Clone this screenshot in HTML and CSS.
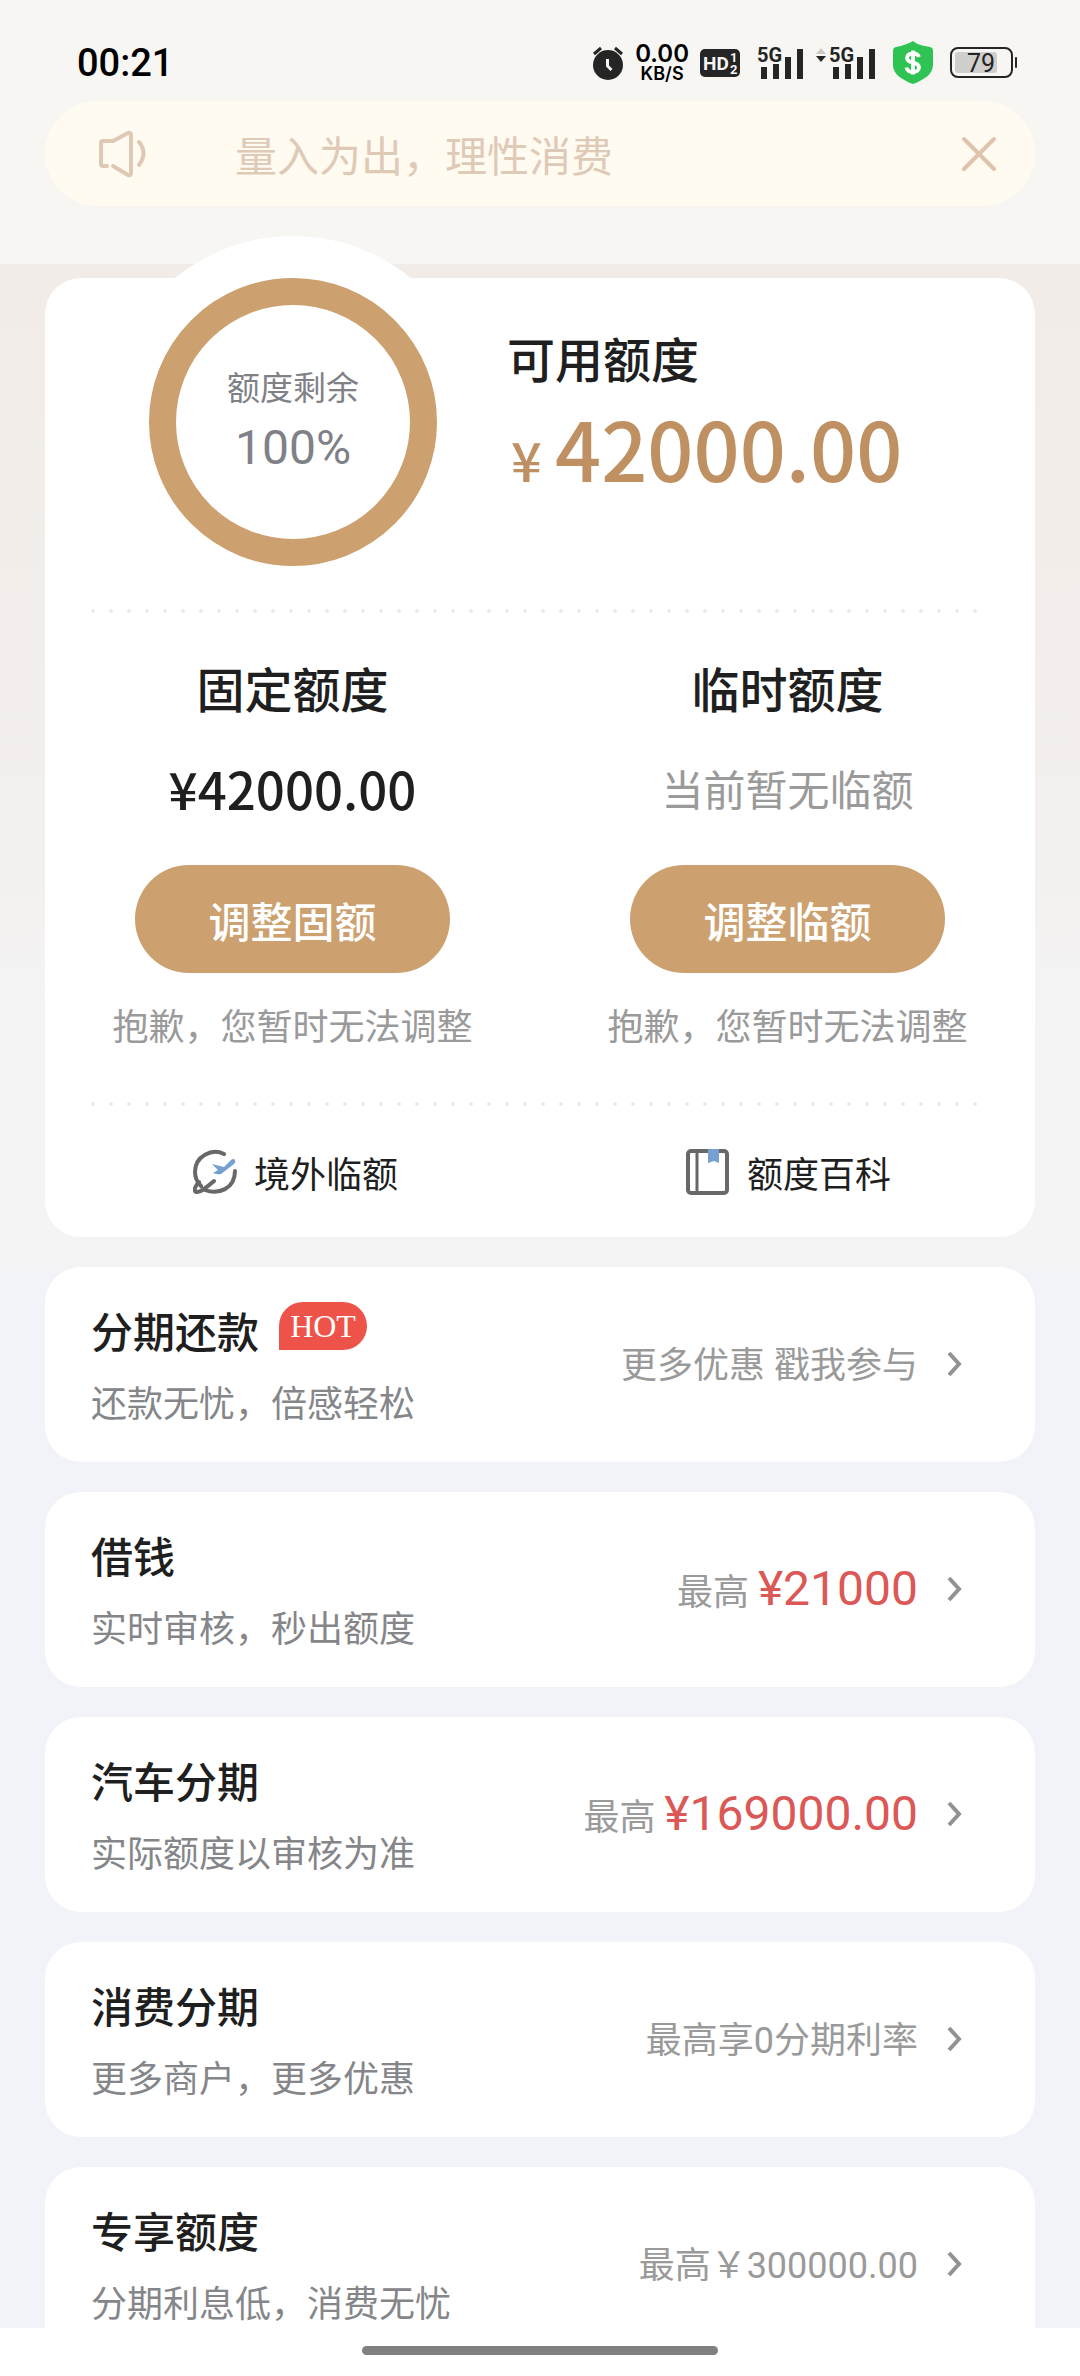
FILE: index.html
```html
<!DOCTYPE html>
<html lang="zh-CN">
<head>
  <meta charset="utf-8">
  <meta name="viewport" content="width=device-width, initial-scale=1">
  <title>我的额度</title>
  <link rel="stylesheet" href="styles.css">
</head>
<body>
  <div class="screen">
    <div class="status-bar">
      <time class="clock">00:21</time>
      <div class="status-icons">
        <div class="status-group">
          <svg width="32" height="34" viewBox="0 0 32 34" aria-hidden="true">
            <circle cx="16" cy="19" r="15" fill="#252525"/>
            <path d="M2 8 9 2M30 8 23 2" stroke="#252525" stroke-width="3" fill="none"/>
            <path d="M15.500 13v7l4 4" stroke="#f7f6f3" stroke-width="3" fill="none"/>
          </svg>
          <div class="net-speed"><span class="net-value">0.00</span><span class="net-unit">KB/S</span></div>
          <svg class="status-svg" width="40" height="28" viewBox="0 0 40 28" role="img" aria-label="HD 1 2">
            <rect width="40" height="28" rx="5" fill="#252525"/>
            <text class="hd" x="3" y="21">HD</text>
            <text class="hd-sim" x="30" y="13">1</text>
            <text class="hd-sim" x="30" y="25">2</text>
          </svg>
        </div>
        <div class="status-group">
          <svg class="status-svg" width="48" height="42" viewBox="0 -4 48 42" role="img" aria-label="5G">
            <text class="net-type" x="0" y="16">5G</text>
            <path d="M4 21h6v12H4zM16 18h6v15h-6zM28 11h6v22h-6zM40 3h6v30h-6z" fill="#252525"/>
          </svg>
          <svg class="status-svg" width="60" height="42" viewBox="0 -4 60 42" role="img" aria-label="5G">
            <path d="M0 8 5 2l5 6z" fill="#c9c9c7"/>
            <path d="M0 10h10l-5 6z" fill="#252525"/>
            <text class="net-type" x="13" y="16">5G</text>
            <path d="M17 21h6v12h-6zM29 18h6v15h-6zM41 11h6v22h-6zM53 3h6v30h-6z" fill="#252525"/>
          </svg>
        </div>
        <svg class="status-svg" width="40" height="44" viewBox="0 0 40 44" role="img" aria-label="$">
          <path d="M20 0c3 3 10 5 17 6q3 .5 3 4v14c0 9-9 15-20 19C9 39 0 33 0 24V10Q0 6.500 3 6 13 4 20 0z" fill="#2fc353"/>
          <path d="M26 16c-1-3-4-3.500-6-3.500-4 0-6 2-6 4.500 0 3 3 4 6 4.600 3.500.7 6 2 6 4.900 0 3-3 4.500-6 4.500-3.500 0-6-1.500-6.500-4.500M20 9.500v24" fill="none" stroke="#fff" stroke-width="3.800"/>
        </svg>
        <svg class="status-svg" width="68" height="32" viewBox="0 0 68 32" role="img" aria-label="79">
          <rect x="1" y="1" width="61" height="29" rx="7" fill="none" stroke="#252525" stroke-width="2"/>
          <rect x="5" y="5" width="42" height="21" rx="3" fill="#cfcfcd"/>
          <rect x="65" y="10" width="2" height="11" rx="1" fill="#252525"/>
          <text class="battery-level" x="17" y="25">79</text>
        </svg>
      </div>
    </div>

    <main class="content">
      <header class="top">
        <div class="notice">
          <svg width="48" height="48" viewBox="0 0 48 48" fill="none" stroke="#dfc9b5" stroke-width="4" stroke-linecap="round" stroke-linejoin="round" aria-hidden="true">
            <path d="M8 36H4q-2 0-2-2V13q0-2 2-2h10L29 3q3-1 3 2v38q0 3-3 2L14 36"/>
            <path d="M40 12q9 11 0 23"/>
          </svg>
          <p class="notice-text">量入为出，理性消费</p>
          <button class="notice-close" type="button" aria-label="关闭">
            <svg width="36" height="36" viewBox="0 0 36 36" fill="none" stroke="#dfc3ac" stroke-width="4" stroke-linecap="round" aria-hidden="true"><path d="m3 3 30 30M33 3 3 33"/></svg>
          </button>
        </div>
      </header>

      <div class="cards">
        <section class="card overview">
          <div class="available">
            <div class="ring">
              <span class="ring-label">额度剩余</span>
              <span class="ring-value">100%</span>
            </div>
            <div class="available-info">
              <h1 class="heading">可用额度</h1>
              <p class="available-amount"><span class="currency">¥</span>42000.00</p>
            </div>
          </div>
          <hr class="dots">
          <div class="limits">
            <div class="limit">
              <h2 class="heading">固定额度</h2>
              <p class="limit-value">¥42000.00</p>
              <button class="adjust" type="button">调整固额</button>
              <p class="limit-note">抱歉，您暂时无法调整</p>
            </div>
            <div class="limit">
              <h2 class="heading">临时额度</h2>
              <p class="limit-value limit-empty">当前暂无临额</p>
              <button class="adjust" type="button">调整临额</button>
              <p class="limit-note">抱歉，您暂时无法调整</p>
            </div>
          </div>
          <hr class="dots">
          <nav class="links">
            <a class="link" href="#">
              <svg width="44" height="46" viewBox="0 0 44 46" fill="none" aria-hidden="true">
                <path d="M31 5C19-1 2 7 2 23c0 6 3 11 6 14M42 22c0 18-17 24-30 19M21 32C14 38 7 44 3 43c-3-2 0-7 3-10" stroke="#686868" stroke-width="4" stroke-linecap="round"/>
                <path d="M19 15l12 3 7-7q3-2 4 0t-1 4L28 25q-3 1-8-1l5-3z" fill="#76a0cf"/>
              </svg>
              境外临额
            </a>
            <a class="link" href="#">
              <svg width="44" height="46" viewBox="0 0 44 46" fill="none" aria-hidden="true">
                <rect x="2" y="2" width="39" height="42" rx="3" stroke="#686868" stroke-width="4"/>
                <path d="M11 3v40" stroke="#686868" stroke-width="3"/>
                <path d="M22 0h11v14l-5-2-6 2z" fill="#76a0cf"/>
              </svg>
              额度百科
            </a>
          </nav>
        </section>

        <a class="card item" href="#">
          <div class="item-main">
            <h3 class="item-title">分期还款 <span class="hot">HOT</span></h3>
            <p class="item-sub">还款无忧，倍感轻松</p>
          </div>
          <p class="item-side">更多优惠 戳我参与</p>
          <svg class="chevron" width="16" height="28" viewBox="0 0 16 28" aria-hidden="true"><path d="m3 3 10 11L3 25"/></svg>
        </a>
        <a class="card item" href="#">
          <div class="item-main">
            <h3 class="item-title">借钱</h3>
            <p class="item-sub">实时审核，秒出额度</p>
          </div>
          <p class="item-side">最高 <strong class="price">¥21000</strong></p>
          <svg class="chevron" width="16" height="28" viewBox="0 0 16 28" aria-hidden="true"><path d="m3 3 10 11L3 25"/></svg>
        </a>
        <a class="card item" href="#">
          <div class="item-main">
            <h3 class="item-title">汽车分期</h3>
            <p class="item-sub">实际额度以审核为准</p>
          </div>
          <p class="item-side">最高 <strong class="price">¥169000.00</strong></p>
          <svg class="chevron" width="16" height="28" viewBox="0 0 16 28" aria-hidden="true"><path d="m3 3 10 11L3 25"/></svg>
        </a>
        <a class="card item" href="#">
          <div class="item-main">
            <h3 class="item-title">消费分期</h3>
            <p class="item-sub">更多商户，更多优惠</p>
          </div>
          <p class="item-side">最高享0分期利率</p>
          <svg class="chevron" width="16" height="28" viewBox="0 0 16 28" aria-hidden="true"><path d="m3 3 10 11L3 25"/></svg>
        </a>
        <a class="card item" href="#">
          <div class="item-main">
            <h3 class="item-title">专享额度</h3>
            <p class="item-sub">分期利息低，消费无忧</p>
          </div>
          <p class="item-side">最高￥300000.00</p>
          <svg class="chevron" width="16" height="28" viewBox="0 0 16 28" aria-hidden="true"><path d="m3 3 10 11L3 25"/></svg>
        </a>
      </div>
    </main>

    <div class="home-bar"><span class="home-handle"></span></div>
  </div>
</body>
</html>
```
FILE: styles.css
```css
* {
  box-sizing: border-box;
}

body,
h1,
h2,
h3,
p {
  margin: 0;
}

body {
  font-family: "Noto Sans CJK SC", sans-serif;
  color: #1f1f1f;
  background: #f2f3f8;
}

button {
  font: inherit;
  border: 0;
  padding: 0;
  cursor: pointer;
}

a {
  color: inherit;
  text-decoration: none;
}

svg {
  display: block;
  flex: none;
}

.screen {
  display: flex;
  flex-direction: column;
  height: 100vh;
}

/* Status bar */
.status-bar {
  display: flex;
  flex: none;
  justify-content: space-between;
  align-items: center;
  height: 101px;
  padding: 24px 62px 0 77px;
  background: #f7f6f3;
}

.clock {
  font: 500 38px/44px Roboto, sans-serif;
  color: #000;
}

.status-icons {
  display: flex;
  align-items: center;
  gap: 17px;
}

.status-group {
  display: flex;
  align-items: center;
  gap: 11px;
}

.net-speed {
  display: flex;
  flex-direction: column;
  align-items: center;
  font-family: Inter, sans-serif;
  font-weight: 600;
  color: #000;
}

.net-value {
  font-size: 24px;
  line-height: 22px;
}

.net-unit {
  font-size: 18px;
  line-height: 18px;
}

.status-svg {
  font-family: Roboto, sans-serif;
}

.hd {
  font-size: 19px;
  font-weight: 700;
  fill: #f7f6f3;
}

.hd-sim {
  font-size: 13px;
  font-weight: 700;
  fill: #f7f6f3;
}

.net-type {
  font-size: 20px;
  font-weight: 700;
  fill: #252525;
}

.battery-level {
  font-size: 25px;
  fill: #252525;
}

/* Scrolling content */
.content {
  flex: 1;
  min-height: 0;
  overflow-y: auto;
  scrollbar-width: none;
}

.top {
  padding: 0 45px 58px;
  background: #f7f6f3;
}

.notice {
  display: flex;
  align-items: center;
  min-height: 105px;
  padding: 0 38px 0 54px;
  border-radius: 53px;
  background: #fffbf1;
}

.notice-text {
  flex: 1;
  margin-left: 88px;
  font-size: 42px;
  line-height: 60px;
  color: #dfcab7;
}

.notice-close {
  background: none;
}

.cards {
  display: flex;
  flex-direction: column;
  gap: 30px;
  padding: 14px 45px 30px;
  background: linear-gradient(#f1ece7, #f3efed 50%, #f4f4f4 75%, #f4f4f4 98%, #f2f3f8) no-repeat top / 100% 1014px;
}

.card {
  border-radius: 36px;
  background: #fff;
}

/* Overview card */
.available {
  display: flex;
  gap: 70px;
  padding: 0 46px 43px 104px;
}

.ring {
  display: flex;
  flex: none;
  flex-direction: column;
  align-items: center;
  gap: 8px;
  width: 288px;
  height: 288px;
  padding-top: 57px;
  border: 27px solid #cca16f;
  border-radius: 50%;
  background: #fff;
  box-shadow: 0 0 0 42px #fff;
  color: #808187;
}

.ring-label {
  font-size: 33px;
  line-height: 48px;
}

.ring-value {
  font: 48px/60px Roboto, sans-serif;
}

.available-info {
  padding-top: 49px;
}

.heading {
  font-size: 48px;
  font-weight: 500;
  line-height: 60px;
}

.available-amount {
  margin-top: 10px;
  font-size: 81px;
  font-weight: 500;
  line-height: 100px;
  color: #be9062;
}

.currency {
  display: inline-block;
  width: 48px;
  padding-left: 4px;
  font-size: 54px;
}

.dots {
  height: 4px;
  margin: 0 46px;
  border: 0;
  background: radial-gradient(circle at 2px 2px, #ebebeb 2px, transparent 2px) 0 0 / 18px 4px repeat-x;
}

.limits {
  display: grid;
  grid-template-columns: 1fr 1fr;
  padding: 44px 0 52px;
}

.limit {
  display: flex;
  flex-direction: column;
  align-items: center;
}

.limit-value {
  margin-top: 41px;
  font-size: 51px;
  font-weight: 500;
  line-height: 60px;
}

.limit-empty {
  font-size: 42px;
  font-weight: 400;
  color: #9a9a9a;
}

.adjust {
  width: 315px;
  height: 108px;
  margin-top: 47px;
  border-radius: 54px;
  background: #cca16f;
  color: #fff;
  font-size: 42px;
  font-weight: 500;
}

.limit-note {
  margin-top: 25px;
  font-size: 36px;
  line-height: 52px;
  color: #9a9a9a;
}

.links {
  display: grid;
  grid-template-columns: 1fr 1fr;
  padding: 40px 0 39px 4px;
}

.link {
  display: flex;
  justify-content: center;
  align-items: center;
  gap: 17px;
  font-size: 36px;
  line-height: 52px;
}

/* Product cards */
.item {
  display: flex;
  align-items: center;
  padding: 35px 73px 37px 46px;
}

.item-main {
  flex: 1;
}

.item-title {
  display: flex;
  gap: 20px;
  font-size: 42px;
  font-weight: 500;
  line-height: 56px;
}

.hot {
  width: 88px;
  height: 48px;
  border-radius: 24px 24px 24px 0;
  background: #ee5349;
  color: #fff;
  font: 32px/48px "Liberation Serif", serif;
  text-align: center;
}

.item-sub {
  margin-top: 19px;
  font-size: 36px;
  line-height: 48px;
  color: #858689;
}

.item-side {
  margin-right: 28px;
  padding-top: 5px;
  font-family: Roboto, "Noto Sans CJK SC", sans-serif;
  font-size: 36px;
  line-height: 56px;
  color: #9a9a9a;
}

.price {
  font-size: 48px;
  font-weight: 400;
  color: #db5856;
}

.chevron {
  fill: none;
  stroke: #929292;
  stroke-width: 4px;
}

/* Gesture bar */
.home-bar {
  display: flex;
  flex: none;
  justify-content: center;
  height: 48px;
  padding-top: 18px;
  background: #fff;
}

.home-handle {
  width: 33%;
  height: 9px;
  border-radius: 5px;
  background: #808080;
}
```
